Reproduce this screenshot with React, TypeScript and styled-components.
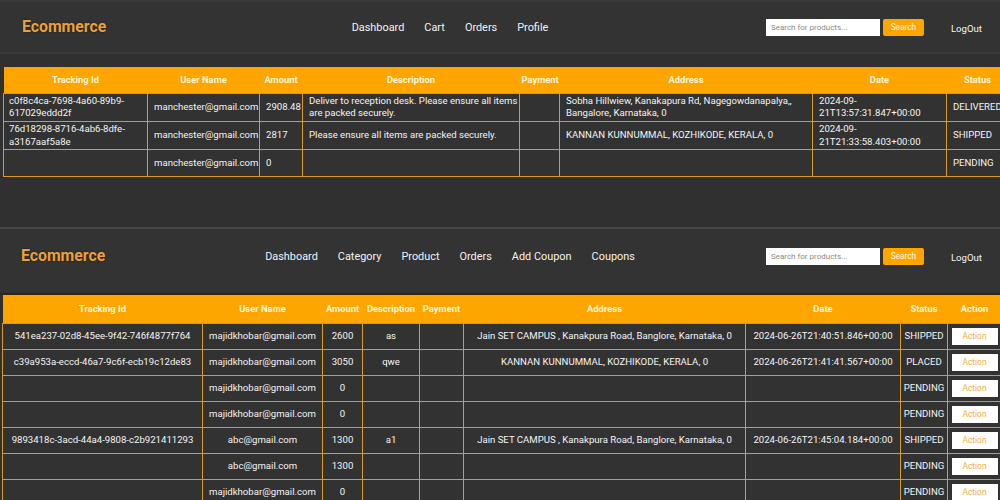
import React from "react";
import styled, { createGlobalStyle } from "styled-components";

const Global = createGlobalStyle`
  html, body { margin: 0; padding: 0; background: #323232; overflow: hidden; }
  body { font-family: Roboto, "Liberation Sans", Arial, sans-serif; }
  * { box-sizing: border-box; }
`;

const Page = styled.div`
  width: 1000px;
  height: 500px;
  display: flex;
  flex-direction: column;
  background: #323232;
`;

const Screen = styled.section<{ $h: number; $top?: boolean }>`
  height: ${(p) => p.$h}px;
  flex: 0 0 auto;
  overflow: hidden;
  background: #303030;
  display: flex;
  flex-direction: column;
  border-top: 2px solid ${(p) => (p.$top ? "#3a3a3a" : "#474747")};
`;

const Nav = styled.nav<{ $h: number; $line: string; $pb: number }>`
  height: ${(p) => p.$h}px;
  flex: 0 0 auto;
  background: #333333;
  border-bottom: 2px solid ${(p) => p.$line};
  display: grid;
  grid-template-columns: 178px 500px 1fr;
  align-items: center;
  padding: 0 18px ${(p) => p.$pb}px 22px;
`;

const Logo = styled.div<{ $dx: number }>`
  font-size: 15.8px;
  font-weight: 700;
  color: #eca137;
  text-shadow: 0 0 2px rgba(0, 0, 0, 0.6);
  margin-left: ${(p) => p.$dx}px;
  margin-top: -2px;
`;

const Links = styled.div`
  display: flex;
  justify-content: center;
  gap: 20px;
`;

const NavLink = styled.a`
  color: #f2f2f2;
  font-size: 10.9px;
  text-decoration: none;
  white-space: nowrap;
`;

const Right = styled.div`
  display: flex;
  justify-content: flex-end;
  align-items: center;
`;

const SearchInput = styled.input`
  width: 114px;
  height: 17px;
  border: none;
  outline: none;
  background: #ffffff;
  font-family: Roboto, "Liberation Sans", sans-serif;
  font-size: 8px;
  padding: 0 0 0 5px;
  &::placeholder { color: #8a8a8a; }
`;

const SearchButton = styled.button`
  width: 41px;
  height: 17px;
  margin-left: 3px;
  border: none;
  border-radius: 2px;
  background: #ffa502;
  color: #fff7e6;
  font-family: Roboto, "Liberation Sans", sans-serif;
  font-size: 8.3px;
  padding: 0;
`;

const Logout = styled.a`
  margin-left: 27px;
  color: #f4f4f4;
  font-size: 9.6px;
  margin-top: 3px;
  text-decoration: none;
`;

const Main = styled.div<{ $pt: number; $pl: number }>`
  padding: ${(p) => p.$pt}px 0 0 ${(p) => p.$pl}px;
  flex: 1 1 auto;
`;

const Table = styled.table<{ $w: number; $center?: boolean }>`
  width: ${(p) => p.$w}px;
  table-layout: fixed;
  border-collapse: collapse;
  font-size: 9.6px;
  color: #f4f4f4;
  text-align: ${(p) => (p.$center ? "center" : "left")};
`;

const Col = styled.col<{ $w: number }>`
  width: ${(p) => p.$w}px;
`;

const Th = styled.th<{ $h: number }>`
  background: #ffa500;
  color: #fff6d8;
  font-weight: 700;
  font-size: 9.4px;
  height: ${(p) => p.$h}px;
  padding: 0 2px;
  text-align: center;
  white-space: nowrap;
  overflow: hidden;
`;

const Td = styled.td<{ $h: number; $pl: number; $pr: number }>`
  background: #323232;
  border: 1px solid #d79b1f;
  height: ${(p) => p.$h}px;
  padding: 1px ${(p) => p.$pr}px 1px ${(p) => p.$pl}px;
  line-height: 12.7px;
  vertical-align: middle;
  overflow: hidden;
  white-space: normal;
  word-break: normal;
`;

const NoWrap = styled.span`
  white-space: nowrap;
`;

const ActionButton = styled.button`
  width: 46px;
  height: 17px;
  border: none;
  background: #ffffff;
  color: #f5ad3c;
  font-family: Roboto, "Liberation Sans", sans-serif;
  font-size: 8.4px;
  padding: 0;
  display: block;
  margin: 0 auto;
`;

const userLinks = ["Dashboard", "Cart", "Orders", "Profile"];
const adminLinks = ["Dashboard", "Category", "Product", "Orders", "Add Coupon", "Coupons"];

const topHeads = ["Tracking Id", "User Name", "Amount", "Description", "Payment", "Address", "Date", "Status"];
const topWidths = [144, 112, 43, 217, 40, 253, 134, 62];
const topRows = [
  [
    "c0f8c4ca-7698-4a60-89b9-617029eddd2f",
    "manchester@gmail.com",
    "2908.48",
    "Deliver to reception desk. Please ensure all items are packed securely.",
    "",
    "Sobha Hillwiew, Kanakapura Rd, Nagegowdanapalya,, Bangalore, Karnataka, 0",
    "2024-09-21T13:57:31.847+00:00",
    "DELIVERED",
  ],
  [
    "76d18298-8716-4ab6-8dfe-a3167aaf5a8e",
    "manchester@gmail.com",
    "2817",
    "Please ensure all items are packed securely.",
    "",
    "KANNAN KUNNUMMAL, KOZHIKODE, KERALA, 0",
    "2024-09-21T21:33:58.403+00:00",
    "SHIPPED",
  ],
  ["", "manchester@gmail.com", "0", "", "", "", "", "PENDING"],
];

const botHeads = ["Tracking Id", "User Name", "Amount", "Description", "Payment", "Address", "Date", "Status", "Action"];
const botWidths = [200, 120, 40, 57, 44, 282, 155, 47, 54];
const jain = "Jain SET CAMPUS , Kanakpura Road, Banglore, Karnataka, 0";
const botRows = [
  ["541ea237-02d8-45ee-9f42-746f4877f764", "majidkhobar@gmail.com", "2600", "as", "", jain, "2024-06-26T21:40:51.846+00:00", "SHIPPED"],
  ["c39a953a-eccd-46a7-9c6f-ecb19c12de83", "majidkhobar@gmail.com", "3050", "qwe", "", "KANNAN KUNNUMMAL, KOZHIKODE, KERALA, 0", "2024-06-26T21:41:41.567+00:00", "PLACED"],
  ["", "majidkhobar@gmail.com", "0", "", "", "", "", "PENDING"],
  ["", "majidkhobar@gmail.com", "0", "", "", "", "", "PENDING"],
  ["9893418c-3acd-44a4-9808-c2b921411293", "abc@gmail.com", "1300", "a1", "", jain, "2024-06-26T21:45:04.184+00:00", "SHIPPED"],
  ["", "abc@gmail.com", "1300", "", "", "", "", "PENDING"],
  ["", "majidkhobar@gmail.com", "0", "", "", "", "", "PENDING"],
];

function NavBar({ links, h, line, logoDx, pb }: { links: string[]; h: number; line: string; logoDx: number; pb: number }) {
  return (
    <Nav $h={h} $line={line} $pb={pb}>
      <Logo $dx={logoDx}>Ecommerce</Logo>
      <Links>
        {links.map((l) => (
          <NavLink key={l}>{l}</NavLink>
        ))}
      </Links>
      <Right>
        <SearchInput placeholder="Search for products..." />
        <SearchButton>Search</SearchButton>
        <Logout>LogOut</Logout>
      </Right>
    </Nav>
  );
}

export default function App() {
  return (
    <Page>
      <Global />
      <Screen $h={227} $top>
        <NavBar links={userLinks} h={52} line="#3b3b3b" logoDx={0} pb={0} />
        <Main $pt={13} $pl={3}>
          <Table $w={1005}>
            <colgroup>
              {topWidths.map((w, i) => (
                <Col key={i} $w={w} />
              ))}
            </colgroup>
            <thead>
              <tr>
                {topHeads.map((h) => (
                  <Th key={h} $h={26}>{h}</Th>
                ))}
              </tr>
            </thead>
            <tbody>
              {topRows.map((r, ri) => (
                <tr key={ri}>
                  {r.map((c, ci) => (
                    <Td key={ci} $h={27} $pl={ci === 0 ? 5 : 6} $pr={1}>
                      {ci === 1 || ci === 7 ? <NoWrap>{c}</NoWrap> : c}
                    </Td>
                  ))}
                </tr>
              ))}
            </tbody>
          </Table>
        </Main>
      </Screen>
      <Screen $h={273}>
        <NavBar links={adminLinks} h={66} line="#262626" logoDx={-1} pb={10} />
        <Main $pt={0} $pl={2}>
          <Table $w={999} $center>
            <colgroup>
              {botWidths.map((w, i) => (
                <Col key={i} $w={w} />
              ))}
            </colgroup>
            <thead>
              <tr>
                {botHeads.map((h) => (
                  <Th key={h} $h={28}>{h}</Th>
                ))}
              </tr>
            </thead>
            <tbody>
              {botRows.map((r, ri) => (
                <tr key={ri}>
                  {r.map((c, ci) => (
                    <Td key={ci} $h={26} $pl={1} $pr={1}>
                      <NoWrap>{c}</NoWrap>
                    </Td>
                  ))}
                  <Td $h={26} $pl={1} $pr={1}>
                    <ActionButton>Action</ActionButton>
                  </Td>
                </tr>
              ))}
            </tbody>
          </Table>
        </Main>
      </Screen>
    </Page>
  );
}
